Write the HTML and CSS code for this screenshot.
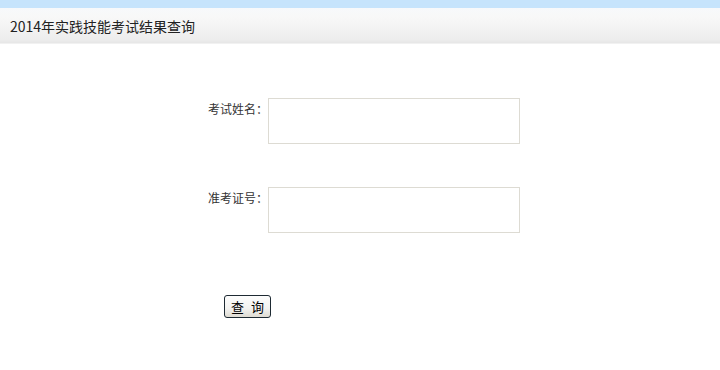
FILE: index.html
```html
<!DOCTYPE html>
<html lang="zh-CN">

<head>
    <meta charset="UTF-8">
    <meta name="viewport" content="width=device-width, initial-scale=1.0">
    <title>2014年实践技能考试结果查询</title>
    <link rel="stylesheet" href="styles.css">
</head>

<body>
    <div class="top-bar"></div>
    <div class="title-bar">2014年实践技能考试结果查询</div>

    <form class="query-form">
        <div class="row">
            <label for="examName">考试姓名：</label>
            <input type="text" id="examName" class="field">
        </div>

        <div class="row">
            <label for="examNo">准考证号：</label>
            <input type="text" id="examNo" class="field">
        </div>

        <div class="actions">
            <button type="button" class="query-btn">查 询</button>
        </div>
    </form>
</body>

</html>
```

FILE: styles.css
```css
* {
    margin: 0;
    padding: 0;
    box-sizing: border-box;
}

html,
body {
    font-size: 12px;
    font-family: "Noto Sans CJK SC", "Liberation Sans", sans-serif;
    color: #333;
    background-color: #fff;
}

.top-bar {
    height: 8px;
    background-color: #c6e4fc;
}

.title-bar {
    height: 36px;
    padding-left: 10px;
    line-height: 36px;
    font-size: 14px;
    color: #222;
    background: linear-gradient(#f7f9fb 0%, #f8f8f8 25%, #ededed 90%, #e6e6e6 100%);
    border-bottom: 1px solid #f1f1f1;
}

.query-form {
    width: 320px;
    margin: 54px auto 0 203px;
    display: flex;
    flex-direction: column;
}

.row {
    display: flex;
    align-items: flex-start;
    margin-bottom: 43px;
}

.row label {
    width: 65px;
    padding-top: 3px;
    text-align: right;
    line-height: 16px;
}

.field {
    width: 252px;
    height: 46px;
    border: 1px solid #dddbd3;
    background-color: #fff;
    outline: none;
}

.actions {
    padding-left: 21px;
    padding-top: 19px;
}

.query-btn {
    width: 47px;
    height: 23px;
    font-family: "Noto Sans CJK SC", sans-serif;
    font-size: 13px;
    line-height: 19px;
    letter-spacing: 2px;
    text-indent: 2px;
    color: #000;
    border: 1px solid #1e2a33;
    border-radius: 3px;
    background: linear-gradient(#fdfdfd 0%, #f2f2f0 60%, #dedbd2 100%);
    cursor: pointer;
}
```
